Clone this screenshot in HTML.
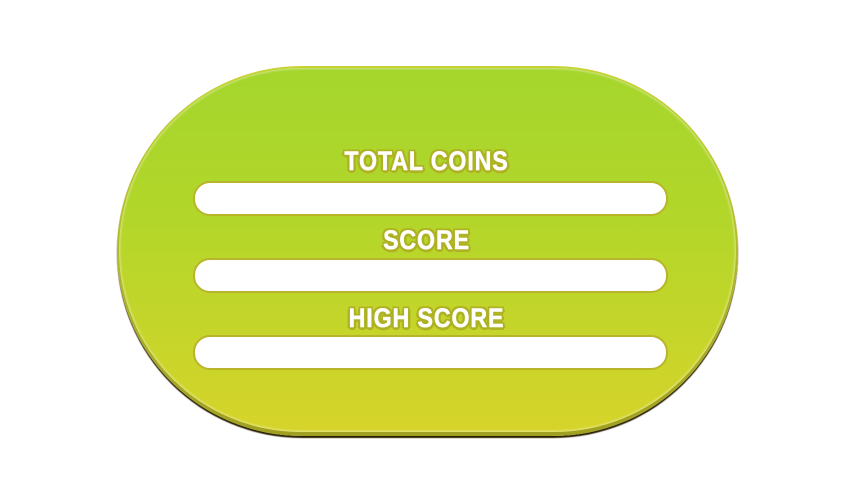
<!DOCTYPE html>
<html><head><style>
html,body{margin:0;padding:0;width:854px;height:480px;background:#fff;overflow:hidden}
.panel{position:absolute;left:117px;top:66px;width:621px;height:370px;border-radius:185px;
background:linear-gradient(#c9d233,#9fa021);box-shadow:0 2px 1px #2a2000}
.inner{position:absolute;left:2px;top:2px;right:2px;bottom:4px;border-radius:183px;
background:linear-gradient(#a5d62c 0%,#b2d62a 40%,#d6d42a 100%);box-shadow:inset 0 0 2px 1px rgba(255,255,255,.45)}
.bar{position:absolute;left:193px;width:471px;height:31px;background:#fff;border:2px solid #b8b52a;border-radius:17px}
.t{position:absolute;left:0;width:854px;text-align:center;font-family:"Liberation Sans",sans-serif;font-weight:bold;font-size:27px;color:#fff;line-height:30px}
.t span{display:inline-block;transform:scaleX(.86);letter-spacing:1px;-webkit-text-stroke:0.5px #fff;
text-shadow:2px 0 #aeb223,-2px 0 #aeb223,0 2px #aeb223,0 -2px #aeb223,2px 2px #aeb223,-2px 2px #aeb223,2px -2px #aeb223,-2px -2px #aeb223,3px 1px #aeb223,-3px 1px #aeb223,1px 3px #aeb223,0 3px #aeb223}
</style></head><body>
<div class="panel"><div class="inner"></div></div>
<div class="bar" style="top:181px"></div>
<div class="bar" style="top:258px"></div>
<div class="bar" style="top:335px"></div>
<div class="t" style="top:146px"><span>TOTAL COINS</span></div>
<div class="t" style="top:225px"><span>SCORE</span></div>
<div class="t" style="top:303px"><span>HIGH SCORE</span></div>
</body></html>
